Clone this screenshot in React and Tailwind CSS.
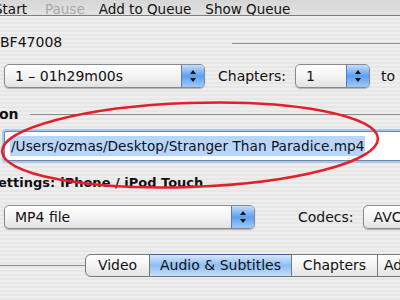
import React from "react";

const FONT = "font-['DejaVu_Sans',_'Liberation_Sans',_sans-serif]";

// little up/down arrows in the blue part of a popup
const Stepper = () => (
  <span className="flex w-[23px] items-center justify-center border-l border-[#4f7fc0] bg-gradient-to-b from-[#c4defb] via-[#5d9ef0] to-[#9fcaf9]">
    <svg width="8" height="14" viewBox="0 0 8 14">
      <path d="M4 1 L7 5 L1 5 Z" fill="#111" />
      <path d="M4 13 L7 9 L1 9 Z" fill="#111" />
    </svg>
  </span>
);

const Popup = ({ className, label, stepper = true }) => (
  <div
    className={`flex h-[24px] shrink-0 overflow-hidden rounded-[5px] border border-[#8a8a8a] bg-gradient-to-b from-white via-[#f4f4f4] to-[#e2e2e2] shadow-[0_1px_1px_rgba(0,0,0,0.25)] ${className}`}
  >
    <span className="flex-1 whitespace-nowrap pl-[10px] text-[14px] leading-[22px] text-[#111]">{label}</span>
    {stepper && <Stepper />}
  </div>
);

const Tab = ({ label, selected, first, className }) => (
  <div
    className={`flex h-[23px] shrink-0 items-center justify-center border-y border-r border-[#777] text-[14px] text-[#111] ${
      first ? "rounded-l-[6px] border-l" : ""
    } ${
      selected
        ? "bg-gradient-to-b from-[#d4e7fd] via-[#8dbdf3] to-[#c3defc] border-t-[#3d5f9a]"
        : "bg-gradient-to-b from-white via-[#f3f3f3] to-[#e4e4e4]"
    } ${className}`}
  >
    {label}
  </div>
);

export default function App() {
  return (
    <div
      className={`relative h-[300px] w-[400px] overflow-hidden bg-[repeating-linear-gradient(180deg,#eeeeee_0px,#eeeeee_2px,#e7e7e7_2px,#e7e7e7_4px)] ${FONT}`}
    >
      {/* toolbar, cut at the top */}
      <div className="flex h-[16px] items-end overflow-hidden border-b border-[#7d7d7d] bg-gradient-to-b from-[#d6d6d6] to-[#e3e3e3] text-[13.5px] leading-[14px]">
        <div className="flex translate-y-[1px] whitespace-nowrap">
          <span className="ml-[-6px] text-[#111]">Start</span>
          <span className="ml-[18px] text-[#a8a8a8]">Pause</span>
          <span className="ml-[14px] text-[#111]">Add to Queue</span>
          <span className="ml-[14px] text-[#111]">Show Queue</span>
        </div>
      </div>

      {/* source */}
      <div className="mt-[19px] flex items-center">
        <span className="text-[14px] leading-[14px] text-[#111]">BF47008</span>
        <span className="ml-auto mt-[2px] h-px w-[168px] bg-[#8c8c8c]" />
      </div>

      <div className="mt-[15px] flex items-center pl-[4px] text-[14px] text-[#111]">
        <Popup className="w-[201px]" label="1 – 01h29m00s" />
        <span className="ml-[13px]">Chapters:</span>
        <Popup className="ml-[9px] w-[75px]" label="1" />
        <span className="ml-[11px]">to</span>
      </div>

      {/* destination */}
      <div className="mt-[19px] flex items-center">
        <span className="ml-[-1px] text-[14px] font-bold leading-[14px] text-[#111]">on</span>
        <span className="ml-[11px] mt-[1px] h-px flex-1 bg-[#8c8c8c]" />
      </div>

      <div className="mt-[10px] pl-[4px]">
        <div className="flex h-[30px] w-[420px] items-center rounded-[2px] border border-[#6b86ad] bg-white pl-[5px] shadow-[0_0_0_2px_#a8c6ee]">
          <span className="whitespace-nowrap bg-[#b8d6fb] px-[1px] text-[13.7px] leading-[20px] text-[#111]">
            /Users/ozmas/Desktop/Stranger Than Paradice.mp4
          </span>
        </div>
      </div>

      {/* output settings */}
      <div className="mt-[14px] flex items-center whitespace-nowrap text-[13px] font-bold leading-[16px] text-[#111]">
        <span className="ml-[-2px]">ettings:</span>
        <span className="ml-[5px]">iPhone / iPod Touch</span>
      </div>

      <div className="mt-[14px] flex items-center pl-[4px] text-[14px] text-[#111]">
        <Popup className="w-[251px]" label="MP4 file" />
        <span className="ml-[43px]">Codecs:</span>
        <Popup className="ml-[9px] w-[80px]" label="AVC/H.264" stepper={false} />
      </div>

      {/* tabs */}
      <div className="mt-[25px] flex items-center">
        <span className="h-px w-[85px] shrink-0 bg-[#8c8c8c]" />
        <Tab first label="Video" className="w-[65px]" />
        <Tab selected label="Audio & Subtitles" className="w-[142px]" />
        <Tab label="Chapters" className="w-[86px]" />
        <Tab label="Advanced" className="w-[90px] justify-start pl-[6px]" />
      </div>

      {/* red marker around the destination */}
      <svg className="pointer-events-none absolute left-0 top-0" width="400" height="300">
        <ellipse
          cx="190"
          cy="145"
          rx="188"
          ry="42"
          transform="rotate(-2 190 145)"
          fill="none"
          stroke="#e3202a"
          strokeWidth="2.5"
        />
      </svg>
    </div>
  );
}
